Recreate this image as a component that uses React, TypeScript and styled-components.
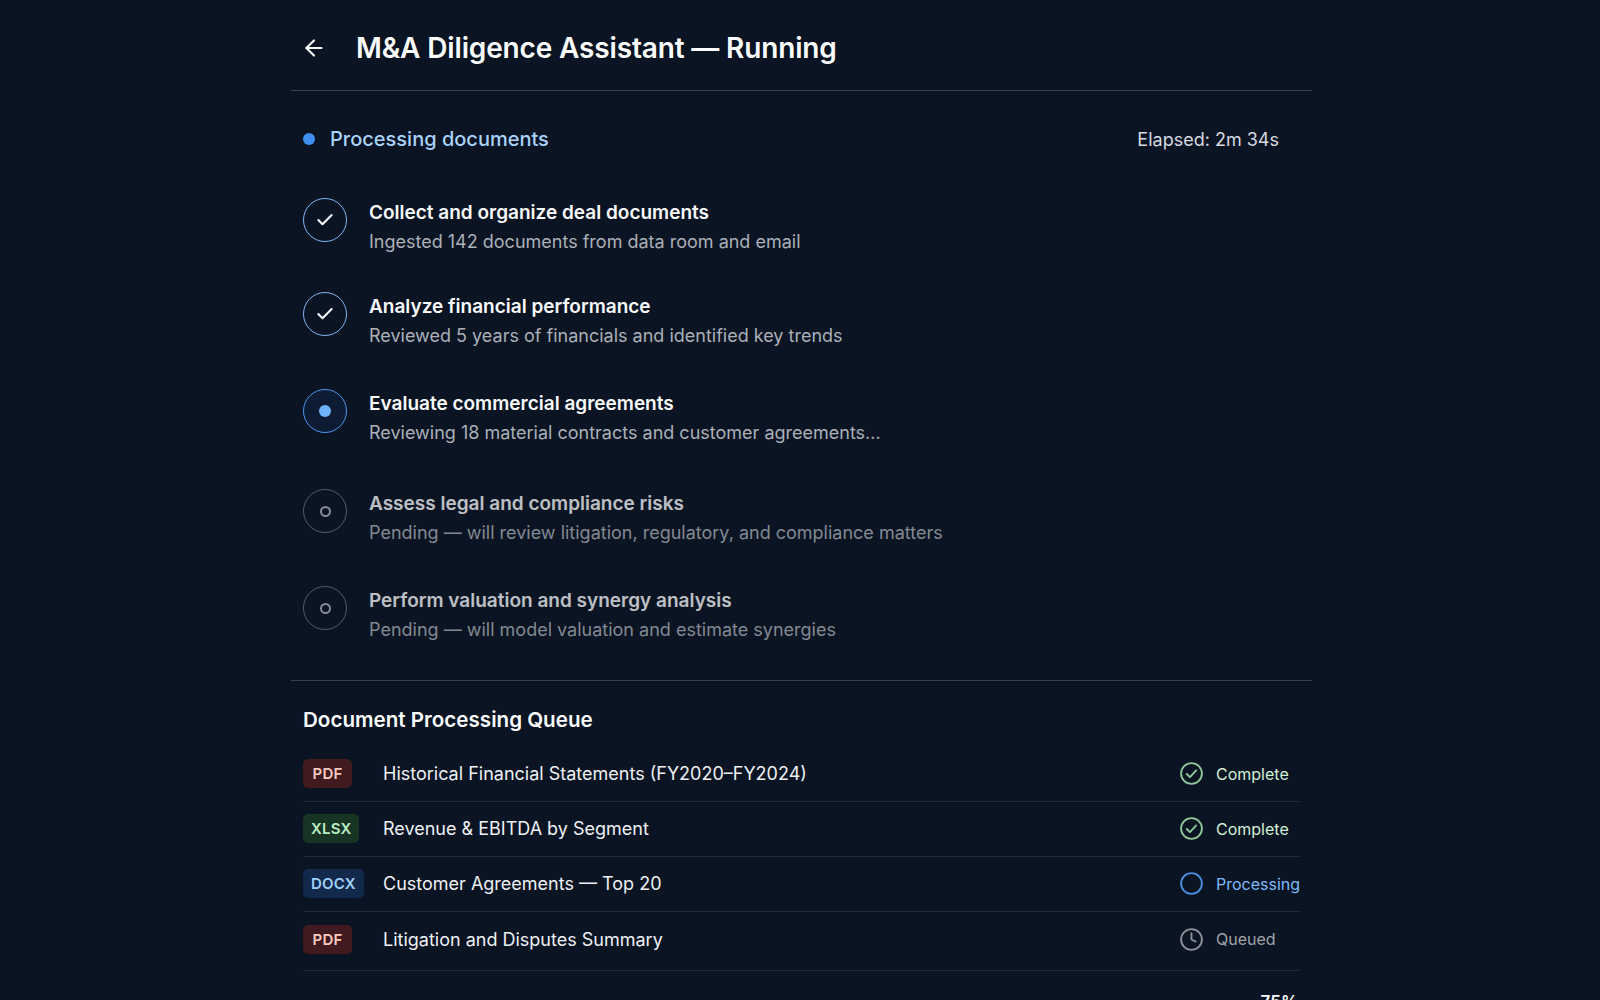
import styled, { createGlobalStyle } from 'styled-components';
import { ArrowLeft, Check, Circle, Clock } from 'lucide-react';

const GlobalStyle = createGlobalStyle`
  html, body {
    margin: 0;
    height: 100%;
    background: #0a1422;
    overflow: hidden;
  }
  body {
    font-family: "Inter", "Liberation Sans", sans-serif;
    color: #f5f7fa;
  }
`;

const Page = styled.main`
  width: 1021px;
  height: 1000px;
  margin-left: 291px;
  overflow: hidden;
`;

const Header = styled.header`
  display: flex;
  align-items: center;
  gap: 29px;
  box-sizing: border-box;
  height: 91px;
  padding: 6px 0 0 10px;
  border-bottom: 1px solid #38414e;
`;

const BackButton = styled.button`
  display: flex;
  width: 26px;
  height: 26px;
  padding: 0;
  background: transparent;
  border: 0;
  color: #f5f7fa;
  cursor: pointer;
`;

const Title = styled.h1`
  margin: 0;
  font-size: 28px;
  font-weight: 600;
  letter-spacing: -0.15px;
  color: #fbfcfd;
`;

const StatusBar = styled.div`
  display: flex;
  align-items: center;
  justify-content: space-between;
  height: 96px;
  padding: 0 33px 0 12px;
`;

const StatusLabel = styled.div`
  display: flex;
  align-items: center;
  gap: 15px;
  font-size: 20px;
  font-weight: 500;
  color: #a9d3fb;
`;

const StatusDot = styled.span`
  width: 12px;
  height: 12px;
  border-radius: 50%;
  background: #3f8ef0;
`;

const Elapsed = styled.span`
  font-size: 18px;
  color: #d6dae1;
`;

const Steps = styled.ol`
  list-style: none;
  box-sizing: border-box;
  margin: 0;
  padding: 11px 12px 0;
  height: 494px;
  border-bottom: 1px solid #38414e;
`;

const Step = styled.li<{ $space: number }>`
  display: flex;
  gap: 22px;
  margin-bottom: ${props => props.$space}px;
`;

const StepCircle = styled.span<{ $state: StepState }>`
  flex: none;
  display: flex;
  align-items: center;
  justify-content: center;
  box-sizing: border-box;
  width: 44px;
  height: 44px;
  border-radius: 50%;
  color: #f5f7fa;
  border: 1.7px solid ${props =>
    props.$state === 'done' ? '#7fb6f2' : props.$state === 'active' ? '#4a94f0' : '#555c66'};
  background: ${props => (props.$state === 'active' ? '#0e1c33' : 'transparent')};
`;

const ActiveDot = styled.span`
  width: 12px;
  height: 12px;
  border-radius: 50%;
  background: #6fb3fb;
`;

const PendingDot = styled.span`
  box-sizing: border-box;
  width: 11px;
  height: 11px;
  border-radius: 50%;
  border: 2.5px solid #878c95;
`;

const StepText = styled.div<{ $state: StepState }>`
  display: flex;
  flex-direction: column;
  gap: 4px;
  margin-top: 2px;
  opacity: ${props => (props.$state === 'pending' ? 0.75 : 1)};
`;

const StepTitle = styled.div`
  font-size: 19px;
  line-height: 25px;
  font-weight: 600;
  color: #f8f9fb;
`;

const StepDetail = styled.div`
  font-size: 18px;
  line-height: 25px;
  color: #abb0b9;
`;

const Queue = styled.section`
  padding: 25px 12px 0;
`;

const QueueTitle = styled.h2`
  margin: 0 0 14px;
  font-size: 20.6px;
  line-height: 27px;
  font-weight: 600;
  color: #fbfcfd;
`;

const QueueRow = styled.div<{ $last?: boolean }>`
  display: flex;
  align-items: center;
  height: ${props => (props.$last ? 59 : 55)}px;
  box-sizing: border-box;
  padding-bottom: ${props => (props.$last ? 4 : 1)}px;
  border-bottom: 1px solid #222a36;
`;

const tagColors = {
  PDF: { bg: '#401a1f', fg: '#fbc9bf' },
  XLSX: { bg: '#183425', fg: '#b9edc4' },
  DOCX: { bg: '#12294b', fg: '#9fd0fb' },
};

const TagCell = styled.div`
  flex: none;
  width: 80px;
`;

const Tag = styled.span<{ $kind: keyof typeof tagColors }>`
  display: inline-block;
  box-sizing: border-box;
  min-width: 49px;
  height: 29px;
  padding: 0 8px;
  border-radius: 5px;
  font-size: 15px;
  line-height: 29px;
  font-weight: 600;
  letter-spacing: 0.2px;
  text-align: center;
  background: ${props => tagColors[props.$kind].bg};
  color: ${props => tagColors[props.$kind].fg};
`;

const DocName = styled.div`
  flex: 1;
  font-size: 18px;
  color: #eef0f4;
`;

const statusColors = {
  Complete: { icon: '#8fc79b', text: '#d2efd8' },
  Processing: { icon: '#4b8fe0', text: '#7dbafa' },
  Queued: { icon: '#8d9097', text: '#a0a3aa' },
};

const DocStatus = styled.div<{ $status: keyof typeof statusColors }>`
  flex: none;
  display: flex;
  align-items: center;
  gap: 12px;
  width: 121px;
  font-size: 16px;
  white-space: nowrap;
  color: ${props => statusColors[props.$status].text};

  svg {
    flex: none;
    color: ${props => statusColors[props.$status].icon};
  }
`;

const Percent = styled.div`
  margin-top: 21px;
  padding-right: 2px;
  text-align: right;
  font-size: 17px;
  line-height: 20px;
  font-weight: 600;
  color: #fbfcfd;
`;

type StepState = 'done' | 'active' | 'pending';

const steps: { title: string; detail: string; state: StepState; space: number }[] = [
  { title: 'Collect and organize deal documents', detail: 'Ingested 142 documents from data room and email', state: 'done', space: 38 },
  { title: 'Analyze financial performance', detail: 'Reviewed 5 years of financials and identified key trends', state: 'done', space: 41 },
  { title: 'Evaluate commercial agreements', detail: 'Reviewing 18 material contracts and customer agreements...', state: 'active', space: 44 },
  { title: 'Assess legal and compliance risks', detail: 'Pending — will review litigation, regulatory, and compliance matters', state: 'pending', space: 41 },
  { title: 'Perform valuation and synergy analysis', detail: 'Pending — will model valuation and estimate synergies', state: 'pending', space: 0 },
];

const docs: { kind: keyof typeof tagColors; name: string; status: keyof typeof statusColors }[] = [
  { kind: 'PDF', name: 'Historical Financial Statements (FY2020–FY2024)', status: 'Complete' },
  { kind: 'XLSX', name: 'Revenue & EBITDA by Segment', status: 'Complete' },
  { kind: 'DOCX', name: 'Customer Agreements — Top 20', status: 'Processing' },
  { kind: 'PDF', name: 'Litigation and Disputes Summary', status: 'Queued' },
];

// lucide's circle-check has a smaller tick than the reference
const CompleteIcon = () => (
  <svg width={25} height={25} viewBox="0 0 24 24" fill="none" stroke="currentColor" strokeWidth={1.8} strokeLinecap="round" strokeLinejoin="round">
    <circle cx={12} cy={12} r={10} />
    <path d="M7.5 12.5l3 3 6-6.5" />
  </svg>
);

const StatusIcon = ({ status }: { status: keyof typeof statusColors }) => {
  if (status === 'Complete') return <CompleteIcon />;
  if (status === 'Processing') return <Circle size={25} strokeWidth={1.8} />;
  return <Clock size={25} strokeWidth={1.8} />;
};

export default function App() {
  return (
    <>
      <GlobalStyle />
      <Page>
        <Header>
          <BackButton aria-label="Back">
            <ArrowLeft size={26} strokeWidth={2} />
          </BackButton>
          <Title>M&amp;A Diligence Assistant — Running</Title>
        </Header>
        <StatusBar>
          <StatusLabel>
            <StatusDot />
            Processing documents
          </StatusLabel>
          <Elapsed>Elapsed: 2m 34s</Elapsed>
        </StatusBar>
        <Steps>
          {steps.map(step => (
            <Step key={step.title} $space={step.space}>
              <StepCircle $state={step.state}>
                {step.state === 'done' && <Check size={20} strokeWidth={2.5} />}
                {step.state === 'active' && <ActiveDot />}
                {step.state === 'pending' && <PendingDot />}
              </StepCircle>
              <StepText $state={step.state}>
                <StepTitle>{step.title}</StepTitle>
                <StepDetail>{step.detail}</StepDetail>
              </StepText>
            </Step>
          ))}
        </Steps>
        <Queue>
          <QueueTitle>Document Processing Queue</QueueTitle>
          {docs.map((doc, i) => (
            <QueueRow key={doc.name} $last={i === docs.length - 1}>
              <TagCell>
                <Tag $kind={doc.kind}>{doc.kind}</Tag>
              </TagCell>
              <DocName>{doc.name}</DocName>
              <DocStatus $status={doc.status}>
                <StatusIcon status={doc.status} />
                {doc.status}
              </DocStatus>
            </QueueRow>
          ))}
          <Percent>75%</Percent>
        </Queue>
      </Page>
    </>
  );
}
